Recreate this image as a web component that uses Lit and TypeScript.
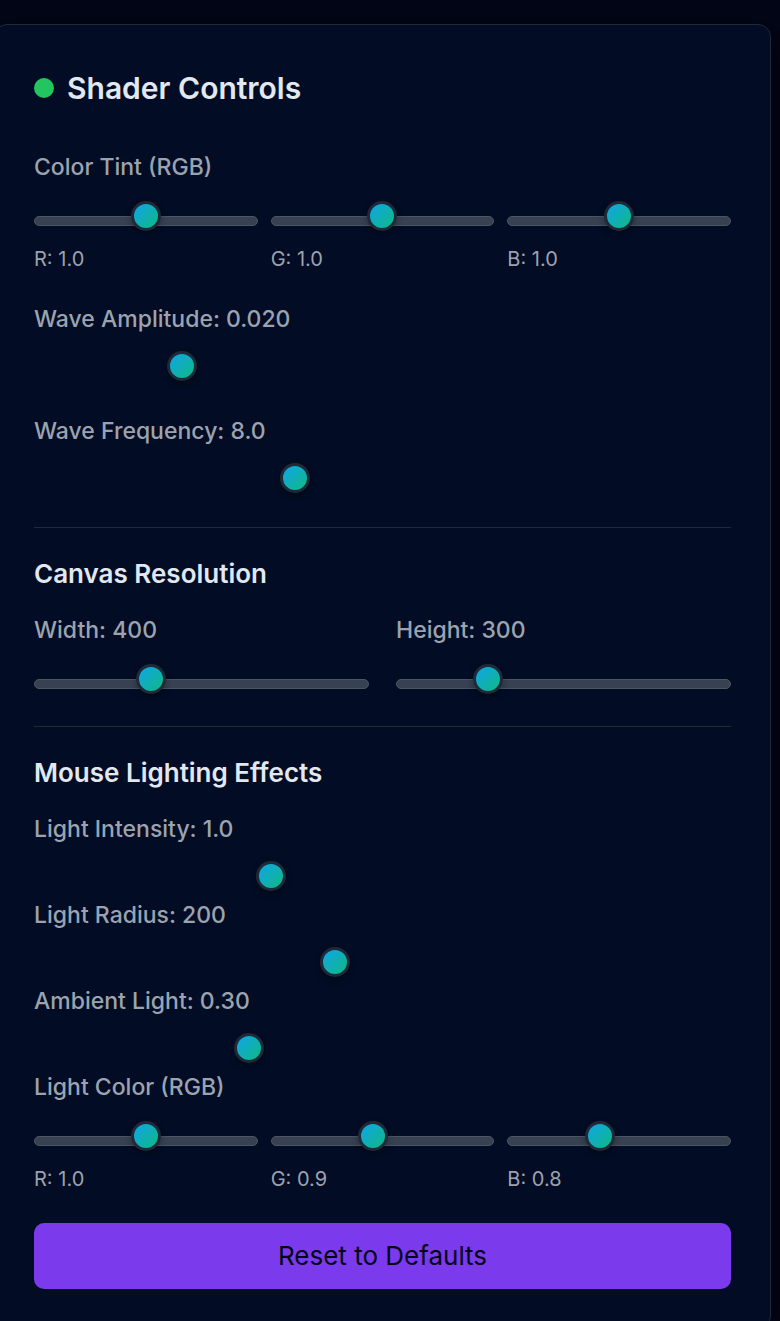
import { LitElement, html, css } from "lit";
import { customElement, state } from "lit/decorators.js";

interface Control {
  key: string;
  label: string;
  min: number;
  max: number;
  step: number;
  digits: number;
}

const control = (key: string, label: string, min: number, max: number, step: number, digits: number): Control => ({
  key, label, min, max, step, digits,
});

const TINT = [
  control("tintR", "R", 0, 2, 0.1, 1),
  control("tintG", "G", 0, 2, 0.1, 1),
  control("tintB", "B", 0, 2, 0.1, 1),
];
const WAVES = [
  control("amplitude", "Wave Amplitude", 0, 0.1, 0.001, 3),
  control("frequency", "Wave Frequency", 1, 20, 0.5, 1),
];
const SIZE = [
  control("width", "Width", 200, 800, 50, 0),
  control("height", "Height", 200, 600, 50, 0),
];
const LIGHT = [
  control("intensity", "Light Intensity", 0, 3, 0.1, 1),
  control("radius", "Light Radius", 50, 400, 10, 0),
  control("ambient", "Ambient Light", 0, 1, 0.05, 2),
];
const LIGHT_COLOR = [
  control("lightR", "R", 0, 2, 0.1, 1),
  control("lightG", "G", 0, 2, 0.1, 1),
  control("lightB", "B", 0, 2, 0.1, 1),
];

const DEFAULTS: Record<string, number> = {
  tintR: 1, tintG: 1, tintB: 1,
  amplitude: 0.02, frequency: 8,
  width: 400, height: 300,
  intensity: 1, radius: 200, ambient: 0.3,
  lightR: 1, lightG: 0.9, lightB: 0.8,
};

@customElement("app-root")
export class AppRoot extends LitElement {
  static styles = css`
    :host {
      display: block;
      box-sizing: border-box;
      height: 100vh;
      overflow: hidden;
      padding: 24px 9px 0 0;
      background: #020617;
      color: #e2e8f0;
      font-family: Inter, sans-serif;
    }
    .card {
      box-sizing: border-box;
      margin-left: -6px;
      padding: 39px;
      border: 1px solid #1f2937;
      border-radius: 13px;
      background: #020c24;
      box-shadow: 0 17px 25px -5px rgb(0 0 0 / 0.4), 0 0 32px rgb(0 0 0 / 0.3);
    }
    .title {
      display: flex;
      align-items: center;
      gap: 13px;
      margin: 0 0 39px;
      font-size: 30px;
      line-height: 48px;
      font-weight: 600;
    }
    .dot {
      width: 20px;
      height: 20px;
      border-radius: 50%;
      background: #22c55e;
    }
    .stack {
      display: flex;
      flex-direction: column;
      gap: 34px;
    }
    .section {
      padding-top: 30px;
      border-top: 1px solid #1f2937;
    }
    .heading {
      margin: 0 0 24px;
      font-size: 26px;
      line-height: 32px;
      font-weight: 600;
    }
    .tight {
      display: flex;
      flex-direction: column;
      gap: 8px;
    }
    .group {
      margin: 0;
      padding: 0;
      border: 0;
      min-width: 0;
    }
    .label {
      display: block;
      padding: 0;
      font-size: 23px;
      line-height: 32px;
      font-weight: 500;
      color: #9ca3af;
    }
    .thirds {
      display: grid;
      grid-template-columns: repeat(3, 1fr);
      gap: 13px;
    }
    .halves {
      display: grid;
      grid-template-columns: repeat(2, 1fr);
      gap: 27px;
    }
    .caption {
      display: block;
      margin-top: 23px;
      font-size: 20px;
      line-height: 20px;
      color: #9ca3af;
    }
    .slider {
      appearance: none;
      display: block;
      box-sizing: border-box;
      width: 100%;
      margin: 16px 0 0;
      height: 30px;
      background: transparent;
      cursor: pointer;
    }
    .slider::-webkit-slider-thumb {
      appearance: none;
      box-sizing: border-box;
      width: 30px;
      height: 30px;
      border: 3px solid #1f2937;
      border-radius: 50%;
      background: linear-gradient(135deg, #0ea5e9, #10b981);
      box-shadow: 0 3px 7px rgb(0 0 0 / 0.3);
    }
    .railed {
      margin: 33px 0 3px;
      height: 10px;
      border: 1px solid #4b5563;
      border-radius: 5px;
      background: #374151;
    }
    .railed::-webkit-slider-runnable-track {
      height: 8px;
    }
    .railed::-webkit-slider-thumb {
      margin-top: -16px;
    }
    .reset {
      display: block;
      width: 100%;
      padding: 13px;
      border: 0;
      border-radius: 10px;
      background: #7c3aed;
      color: #020617;
      font: 400 26px/40px Inter, sans-serif;
      cursor: pointer;
    }
  `;

  @state() private values: Record<string, number> = { ...DEFAULTS };

  private text(c: Control) {
    return `${c.label}: ${this.values[c.key].toFixed(c.digits)}`;
  }

  private slider(c: Control, railed: boolean) {
    return html`<input
      id=${c.key}
      class=${railed ? "slider railed" : "slider"}
      type="range"
      min=${c.min}
      max=${c.max}
      step=${c.step}
      .value=${String(this.values[c.key])}
      @input=${(e: Event) => {
        this.values = { ...this.values, [c.key]: Number((e.target as HTMLInputElement).value) };
      }}
    />`;
  }

  private field(c: Control, railed = false) {
    return html`<div class="group">
      <label class="label" for=${c.key}>${this.text(c)}</label>
      ${this.slider(c, railed)}
    </div>`;
  }

  private channels(legend: string, items: Control[]) {
    return html`<fieldset class="group">
      <legend class="label">${legend}</legend>
      <div class="thirds">
        ${items.map(
          (c) => html`<div>
            ${this.slider(c, true)}
            <label class="caption" for=${c.key}>${this.text(c)}</label>
          </div>`
        )}
      </div>
    </fieldset>`;
  }

  render() {
    return html`<main class="card">
      <h2 class="title"><span class="dot"></span>Shader Controls</h2>
      <div class="stack">
        ${this.channels("Color Tint (RGB)", TINT)}
        ${WAVES.map((c) => this.field(c))}
        <section class="section">
          <h3 class="heading">Canvas Resolution</h3>
          <div class="halves">${SIZE.map((c) => this.field(c, true))}</div>
        </section>
        <section class="section">
          <h3 class="heading">Mouse Lighting Effects</h3>
          <div class="tight">
            ${LIGHT.map((c) => this.field(c))}
            ${this.channels("Light Color (RGB)", LIGHT_COLOR)}
          </div>
        </section>
        <button class="reset" type="button" @click=${() => (this.values = { ...DEFAULTS })}>
          Reset to Defaults
        </button>
      </div>
    </main>`;
  }
}
